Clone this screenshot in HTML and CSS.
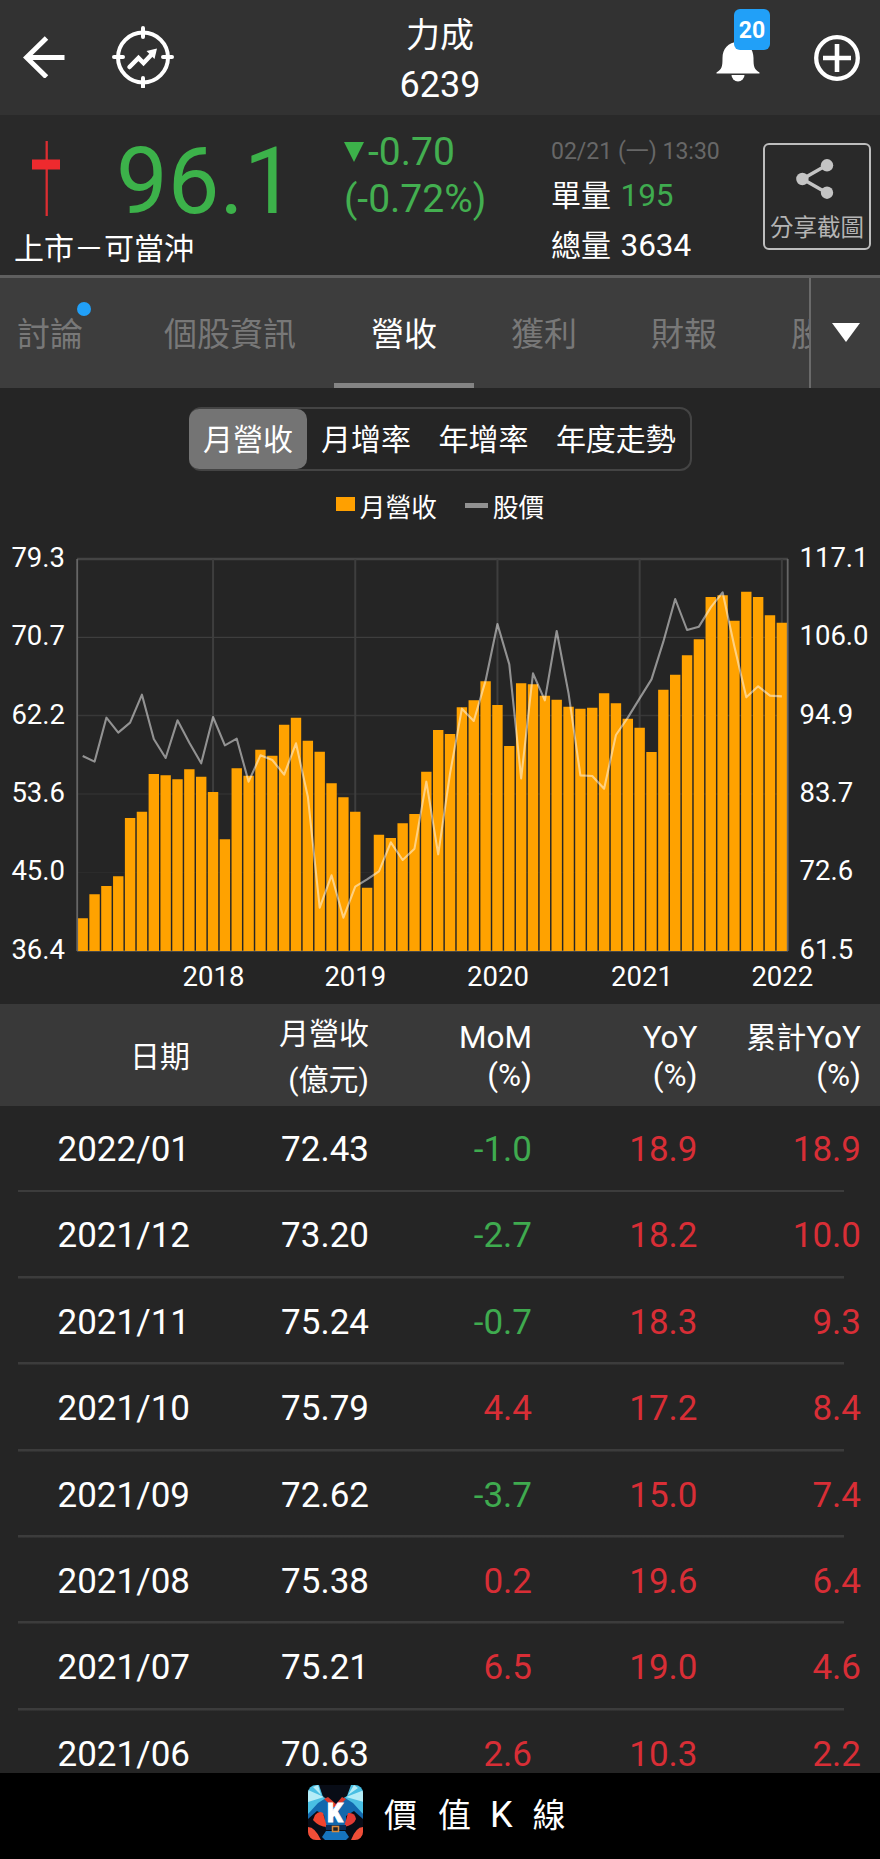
FILE: index.html
```html
<!DOCTYPE html>
<html lang="zh-Hant">
<head>
<meta charset="utf-8">
<title>力成 6239</title>
<link rel="stylesheet" href="styles.css">
</head>
<body>
<header class="topbar">
  <div class="side">
    <svg class="back" width="42" height="42" viewBox="0 0 42 42"><path d="M41.5 21.5H4M23.5 2L3.5 21.5L23.5 41" fill="none" stroke="#fff" stroke-width="5"/></svg>
    <svg class="scope" width="62" height="62" viewBox="0 0 62 62" fill="none" stroke="#fff"><circle cx="31" cy="31.5" r="25" stroke-width="4"/><path d="M31 2v9M31 52v9M2 31h9M51 31h9" stroke-width="4" stroke-linecap="round"/><path d="M17.500 41L26.500 32L31.500 37L41 27" stroke-width="4.500" stroke-linecap="round"/><path d="M34.500 25L45 22.500L42.500 33Z" fill="#fff" stroke="none"/></svg>
  </div>
  <div class="title"><span>力成</span><span>6239</span></div>
  <div class="side end">
    <div class="bell">
      <svg width="44" height="41" viewBox="0 0 44 41"><path d="M22 1C12 1 6.500 8 6.500 17C6.500 26 6 28 .5 31.500V32.500H43.500V31.500C38 28 37.500 26 37.500 17C37.500 8 32 1 22 1Z" fill="#fff"/><path d="M15.500 34H28.500A6.500 6.500 0 0 1 15.500 34Z" fill="#fff"/></svg>
      <span class="badge">20</span>
    </div>
    <svg class="plus" width="46" height="46" viewBox="0 0 46 46" fill="none" stroke="#fff"><circle cx="23" cy="23" r="20.800" stroke-width="4.300"/><path d="M23 9V37M9 23H37" stroke-width="4.600"/></svg>
  </div>
</header>

<section class="quote">
  <div class="price-block">
    <div class="price-row">
      <svg width="28" height="76" viewBox="0 0 28 76"><path d="M14.700 0V75" stroke="#dc2d31" stroke-width="2.300"/><path d="M0 18.500H28V28.500H0Z" fill="#ee2a2e"/></svg>
      <span class="price">96.1</span>
    </div>
    <div class="market">上市－可當沖</div>
  </div>
  <div class="change"><span><svg width="20" height="20" viewBox="0 0 20 20"><path d="M0 0H20L10 20Z" fill="#3cb24a"/></svg>-0.70</span><span>(-0.72%)</span></div>
  <div class="volume">
    <span class="time">02/21 (一) 13:30</span>
    <span class="vol">單量 <b class="dn">195</b></span>
    <span class="vol">總量 <b>3634</b></span>
  </div>
  <div class="share">
    <svg width="38" height="40" viewBox="0 0 38 40"><path d="M31 6L6.500 20L31 34" fill="none" stroke="#c4c4c4" stroke-width="3.500"/><g fill="#c4c4c4"><circle cx="31" cy="6.300" r="6.200"/><circle cx="6.400" cy="20" r="6.200"/><circle cx="31" cy="33.700" r="6.200"/></g></svg>
    <span>分享截圖</span>
  </div>
</section>

<nav class="tabs">
  <div class="strip">
    <span class="tab t1">討論<i class="dot"></i></span>
    <span class="tab t2">個股資訊</span>
    <span class="tab active">營收</span>
    <span class="tab">獲利</span>
    <span class="tab">財報</span>
    <span class="tab">股利</span>
  </div>
  <div class="more"><svg width="28" height="19" viewBox="0 0 28 19"><path d="M0 0H28L14 19Z" fill="#fff"/></svg></div>
</nav>

<section class="revenue">
  <div class="segment">
    <span class="seg on">月營收</span><span class="seg">月增率</span><span class="seg">年增率</span><span class="seg wide">年度走勢</span>
  </div>
  <div class="legend">
    <i class="sw-bar"></i><span>月營收</span><i class="sw-line"></i><span>股價</span>
  </div>
  <svg class="chart" width="880" height="474" viewBox="0 0 880 474">
    <g id="grid"></g>
    <path id="bars" class="bars"/>
    <path class="axis" d="M77.200 29V421M787.700 29V421"/>
    <polyline id="line" class="line"/>
    <g id="labels" class="labels"></g>
  </svg>
</section>

<section class="table">
  <div class="row head">
    <span class="cjk">日期</span><span class="cjk two">月營收<br>(億元)</span><span>MoM<br>(%)</span><span>YoY<br>(%)</span><span><span class="cjk">累計</span>YoY<br>(%)</span>
  </div>
  <div class="body">
    <div class="row"><span>2022/01</span><span>72.43</span><span class="dn">-1.0</span><span class="up">18.9</span><span class="up">18.9</span></div>
    <div class="row"><span>2021/12</span><span>73.20</span><span class="dn">-2.7</span><span class="up">18.2</span><span class="up">10.0</span></div>
    <div class="row"><span>2021/11</span><span>75.24</span><span class="dn">-0.7</span><span class="up">18.3</span><span class="up">9.3</span></div>
    <div class="row"><span>2021/10</span><span>75.79</span><span class="up">4.4</span><span class="up">17.2</span><span class="up">8.4</span></div>
    <div class="row"><span>2021/09</span><span>72.62</span><span class="dn">-3.7</span><span class="up">15.0</span><span class="up">7.4</span></div>
    <div class="row"><span>2021/08</span><span>75.38</span><span class="up">0.2</span><span class="up">19.6</span><span class="up">6.4</span></div>
    <div class="row"><span>2021/07</span><span>75.21</span><span class="up">6.5</span><span class="up">19.0</span><span class="up">4.6</span></div>
    <div class="row"><span>2021/06</span><span>70.63</span><span class="up">2.6</span><span class="up">10.3</span><span class="up">2.2</span></div>
  </div>
</section>

<footer class="brand">
  <svg width="56" height="56" viewBox="0 0 56 56">
    <defs><clipPath id="round"><rect width="55" height="55" rx="8"/></clipPath></defs>
    <g clip-path="url(#round)">
      <rect width="56" height="56" fill="#080c16"/>
      <path d="M0 0H11L15 12L20 14L0 30ZM56 0H43L39 11L34 14L56 30Z" fill="#49bfe3"/>
      <path d="M0 5L16 12L0 17ZM10 0L13 10L5 2ZM56 5L38 12L56 17ZM46 0L40 10L50 3Z" fill="#b4ecf7"/>
      <path d="M0 29L10 18L18 13L28 22L37 13L45 18L55 29V34L46 26L38 31L38 44H18L16 30L9 26L0 34Z" fill="#1268ad"/>
      <path d="M16 14L20 12L28 19L34 12L38 14L30 22H25Z" fill="#d9392c"/>
      <path d="M7 30Q11 25 15 28L19 42Q11 42 5 35Z" fill="#f0442e"/><path d="M40 28Q47 27 48 34Q46 40 36 42Z" fill="#e23a35"/>
      <path d="M0 42Q7 42 13 55H4L0 50ZM55 42Q48 42 43 55H51L55 50Z" fill="#f04e38"/>
      <path d="M18 40H38V45H18Z" fill="#0b2c55"/>
      <path d="M18 46H37L41 52L38 55H17L14 52Z" fill="#1673bd"/>
      <rect x="24.500" y="41.500" width="6" height="5" fill="#222" stroke="#d98a3c" stroke-width="1.500"/>
    </g>
    <text x="27" y="37" text-anchor="middle" class="logo-k">K</text>
  </svg>
  <span>價</span><span>值</span><span class="k">K</span><span>線</span>
</footer>
<script src="chart.js"></script>
</body>
</html>
```
FILE: styles.css
```css
* { box-sizing: border-box; }
body { margin: 0; width: 880px; height: 1859px; overflow: hidden; display: flex; flex-direction: column; background: #252525; color: #fff; font-family: Roboto, "Noto Sans CJK TC", sans-serif; }
svg { display: block; flex: none; }
span { white-space: nowrap; }

.topbar { height: 115px; flex: none; background: #323232; display: grid; grid-template-columns: 1fr auto 1fr; }
.side { display: flex; align-items: flex-start; }
.back { margin: 36px 0 0 23px; }
.scope { margin: 26px 0 0 47px; }
.end { justify-content: flex-end; }
.title { display: flex; flex-direction: column; align-items: center; font-size: 34px; line-height: 50px; padding-top: 10px; }
.title span + span { font-size: 36px; }
.bell { position: relative; margin: 41px 54px 0 0; }
.badge { position: absolute; left: 18px; top: -32px; width: 36px; height: 41px; border-radius: 6px; background: #21a0f8; font-size: 23px; font-weight: 700; line-height: 43px; text-align: center; }
.plus { margin: 35px 20px 0 0; }

.quote { height: 160px; flex: none; background: #292929; display: grid; grid-template-columns: 344px 207px 212px 108px; }
.price-row { display: flex; height: 113px; padding: 26px 0 0 32px; }
.price { margin-left: 56px; font-size: 92px; line-height: 82px; color: #3cb24a; }
.market { padding-left: 14px; font-size: 30px; line-height: 42px; }
.change { padding-top: 14px; display: flex; flex-direction: column; font-size: 39px; line-height: 46.500px; color: #43af50; }
.change span { display: flex; }
.change svg { margin: 13px 4px 0 0; }
.volume { display: flex; flex-direction: column; }
.time { margin-top: 21px; font-size: 23px; line-height: 32px; color: #676767; }
.vol { font-size: 30px; line-height: 44px; margin-top: 6px; }
.vol b { font-weight: 400; font-size: 31.500px; margin-left: 2px; }
.share { width: 108px; height: 107px; margin-top: 28px; border: 2px solid #bdbdbd; border-radius: 6px; display: flex; flex-direction: column; align-items: center; padding-top: 14px; color: #b4b4b4; font-size: 23.500px; line-height: 34px; }
.share svg { margin: 0 4px 12px 0; }

.tabs { height: 113px; flex: none; border-top: 3px solid #5f5f5f; background: #3d3d3d; display: flex; }
.strip { width: 809px; overflow: hidden; display: flex; }
.tab { width: 140px; flex: none; text-align: center; font-size: 33px; line-height: 114px; color: #787878; }
.t1 { width: 100px; position: relative; }
.strip .t2 { width: 234px; padding-left: 26px; }
.strip .active { color: #fff; box-shadow: inset 0 -5px #848484; }
.dot { position: absolute; left: 77px; top: 24px; width: 14px; height: 14px; border-radius: 50%; background: #21a0f8; }
.more { width: 71px; border-left: 2px solid #6a6a6a; padding: 45px 0 0 21px; }

.revenue { height: 616px; flex: none; display: flex; flex-direction: column; align-items: center; }
.segment { display: flex; margin: 19px 0 0 0; width: 503px; height: 64px; border: 2px solid #444; border-radius: 12px; }
.seg { width: 118px; text-align: center; font-size: 30px; line-height: 62px; }
.seg.wide { width: 148px; }
.segment .on { width: 119.500px; background: #747474; border-radius: 10px; margin-left: -2px; }
.legend { display: flex; align-items: center; height: 48px; margin: 10px 0 1px 0; font-size: 25.700px; }
.sw-bar { width: 19px; height: 14px; background: #ffa000; margin-right: 5px; margin-top: -2px; }
.sw-line { width: 23px; height: 5px; background: #919191; margin: 0 5px 0 28px; }
.bars { stroke: #ffa200; stroke-width: 10.400; }
.axis { stroke: #666; stroke-width: 1.800; }
.line { fill: none; stroke: rgba(255, 255, 255, .5); stroke-width: 2.100; stroke-linejoin: round; }
.labels { fill: #fff; font-size: 27.500px; }
.mid { text-anchor: middle; }
.end-anchor { text-anchor: end; }

.row { display: grid; grid-template-columns: 190px 179px 163px 165.500px 163.500px; text-align: right; font-size: 35px; }
.head { height: 102px; background: #393939; align-items: center; font-size: 31.500px; line-height: 38px; padding-top: 3px; }
.cjk { font-size: 30px; }
.two { line-height: 46px; }
.body { height: 667px; overflow: hidden; }
.body .row { height: 86.400px; line-height: 87.500px; background: linear-gradient(#3c3c3c, #3c3c3c) 18px 83.500px / 826px 2.500px no-repeat; }
.up { color: #d82e36; }
.dn { color: #3fab4f; }

.brand { flex: 1; background: #000; display: flex; padding: 12px 0 0 308px; font-size: 33px; line-height: 61px; }
.brand svg { margin-right: 20px; }
.brand span { margin-right: 21px; }
.brand .k { font-size: 36px; margin: 0 20px 0 -2px; }
.logo-k { fill: #fff; stroke: #fff; stroke-width: .8; font: 900 25px Roboto, sans-serif; }
```
FILE: chart.js
```js
// Plot coordinates are kept in thirds of a pixel.
const revenue = [1165,1093,1068,1039,864,845,732,736,748,718,740,786,928,715,737,659,677,584,563,632,665,760,802,845,1073,914,924,880,852,725,600,612,532,511,454,525,648,460,463,497,509,530,536,533,490,520,566,593,666,479,434,376,328,201,196,272,185,201,256,278];
const price = [678,695,563,608,578,494,627,684,571,638,700,561,646,626,755,676,690,734,640,800,1133,1036,1163,1070,1048,1024,937,990,956,755,973,730,536,573,452,282,403,745,430,511,303,490,736,738,776,615,563,505,448,335,207,300,290,232,187,350,502,469,497,499];
const x = i => 82.7 + i * 11.85;
const el = id => document.getElementById(id);

el('bars').setAttribute('d', revenue.map((v, i) => `M${x(i)} 421V${v / 3}`).join(''));
el('line').setAttribute('points', price.map((v, i) => `${x(i)},${v / 3}`).join(' '));

const rows = [29, 107.3, 185.5, 264, 342.4, 421];
const left = ['79.3', '70.7', '62.2', '53.6', '45.0', '36.4'];
const right = ['117.1', '106.0', '94.9', '83.7', '72.6', '61.5'];
const shade = ['#444', '#3e3e3e', '#383838', '#313131', '#2b2b2b', '#555'];

el('grid').innerHTML =
  rows.map((y, i) => `<path d="M77 ${y}H788" stroke="${shade[i]}" stroke-width="${i ? 1.3 : 2.3}"/>`).join('') +
  [11, 23, 35, 47, 59].map(i => `<path d="M${x(i)} 29V421" stroke="#3e3e3e" stroke-width="2"/>`).join('');

el('labels').innerHTML =
  rows.map((y, i) => `<text x="65" y="${y + 8}" class="end-anchor">${left[i]}</text><text x="799.5" y="${y + 8}">${right[i]}</text>`).join('') +
  [[213.5, 2018], [355.3, 2019], [498, 2020], [642, 2021], [782.3, 2022]].map(([cx, t]) => `<text x="${cx}" y="456" class="mid">${t}</text>`).join('');
```
